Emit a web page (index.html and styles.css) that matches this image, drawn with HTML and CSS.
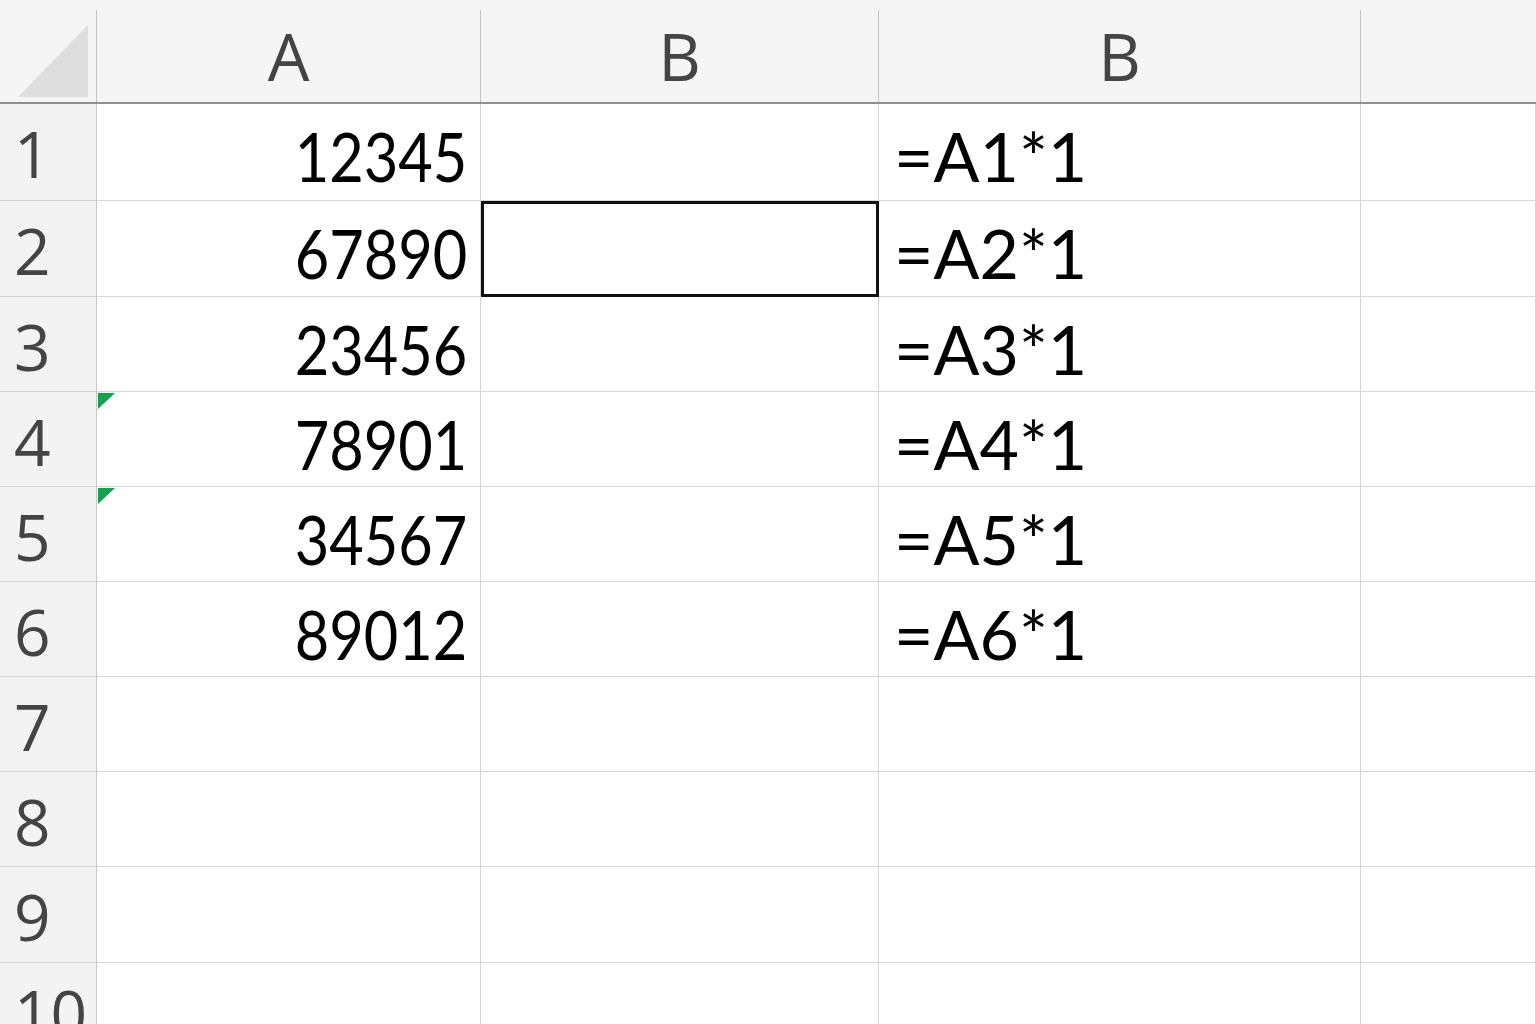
FILE: index.html
```html
<!DOCTYPE html>
<html>
<head>
<meta charset="utf-8">
<link rel="stylesheet" href="styles.css">
</head>
<body>
<div class="sheet">
  <div class="hdr corner"><div class="hdr-in"><svg class="corner-tri" width="72" height="74" viewBox="0 0 72 74"><polygon points="0,72 70,0 70,72" fill="#dedede"/></svg></div></div>
  <div class="hdr"><div class="hdr-in">A</div></div>
  <div class="hdr"><div class="hdr-in">B</div></div>
  <div class="hdr"><div class="hdr-in">B</div></div>
  <div class="hdr last"><div class="hdr-in"></div></div>

  <div class="rh">1</div><div class="c num"><span class="v">12345</span></div><div class="c"></div><div class="c fx">=A1*1</div><div class="c"></div>
  <div class="rh">2</div><div class="c num"><span class="v">67890</span></div><div class="c sel"></div><div class="c fx">=A2*1</div><div class="c"></div>
  <div class="rh">3</div><div class="c num"><span class="v">23456</span></div><div class="c"></div><div class="c fx">=A3*1</div><div class="c"></div>
  <div class="rh">4</div><div class="c num flag"><span class="v">78901</span></div><div class="c"></div><div class="c fx">=A4*1</div><div class="c"></div>
  <div class="rh">5</div><div class="c num flag"><span class="v">34567</span></div><div class="c"></div><div class="c fx">=A5*1</div><div class="c"></div>
  <div class="rh">6</div><div class="c num"><span class="v">89012</span></div><div class="c"></div><div class="c fx">=A6*1</div><div class="c"></div>
  <div class="rh">7</div><div class="c"></div><div class="c"></div><div class="c"></div><div class="c"></div>
  <div class="rh">8</div><div class="c"></div><div class="c"></div><div class="c"></div><div class="c"></div>
  <div class="rh">9</div><div class="c"></div><div class="c"></div><div class="c"></div><div class="c"></div>
  <div class="rh">10</div><div class="c"></div><div class="c"></div><div class="c"></div><div class="c"></div>
</div>
</body>
</html>
```
FILE: styles.css
```css
html, body {
  margin: 0;
  padding: 0;
  background: #ffffff;
  overflow: hidden;
}
.sheet {
  width: 1536px;
  height: 1024px;
  display: grid;
  grid-template-columns: 97px 384px 398px 482px 1fr;
  grid-template-rows: 104px 97px 96px 95px 95px 95px 95px 95px 95px 96px 96px;
  overflow: hidden;
}
.hdr {
  background: #f5f5f5;
  border-bottom: 2px solid #8f8f8f;
  box-sizing: border-box;
  padding-top: 10px;
  display: flex;
}
.hdr-in {
  flex: 1;
  border-right: 1px solid #c4c4c4;
  display: flex;
  align-items: center;
  justify-content: center;
  font-family: "Open Sans", sans-serif;
  font-size: 66px;
  color: #444444;
  line-height: 1;
  padding-bottom: 2px;
}
.hdr.last .hdr-in { border-right: none; }
.corner .hdr-in {
  border-right: 1px solid #c4c4c4;
  align-items: flex-start;
  justify-content: flex-start;
  padding: 15px 0 0 18px;
}
.corner-tri { display: block; }
.rh {
  background: #f3f3f3;
  border-right: 1px solid #c8c8c8;
  border-bottom: 1px solid #d6d6d6;
  box-sizing: border-box;
  font-family: "Open Sans", sans-serif;
  font-size: 64px;
  color: #444444;
  line-height: 1;
  padding: 18px 0 0 14px;
}
.c {
  position: relative;
  border-right: 1px solid #d6d6d6;
  border-bottom: 1px solid #d6d6d6;
  box-sizing: border-box;
  font-family: "Lato", sans-serif;
  font-size: 68px;
  color: #000000;
  line-height: 1;
  padding-top: 18px;
}
.num {
  text-align: right;
  padding-right: 13px;
  white-space: nowrap;
}
.v {
  display: inline-block;
  transform: scaleX(0.875);
  transform-origin: right center;
}
.fx {
  padding-left: 15px;
  white-space: nowrap;
}
.sel {
  outline: 3px solid #111111;
  outline-offset: -3px;
  z-index: 2;
}
.flag::before {
  content: "";
  position: absolute;
  left: 1px;
  top: 1px;
  width: 17px;
  height: 16px;
  background: #17a04f;
  clip-path: polygon(0 0, 100% 0, 0 100%);
}
```
